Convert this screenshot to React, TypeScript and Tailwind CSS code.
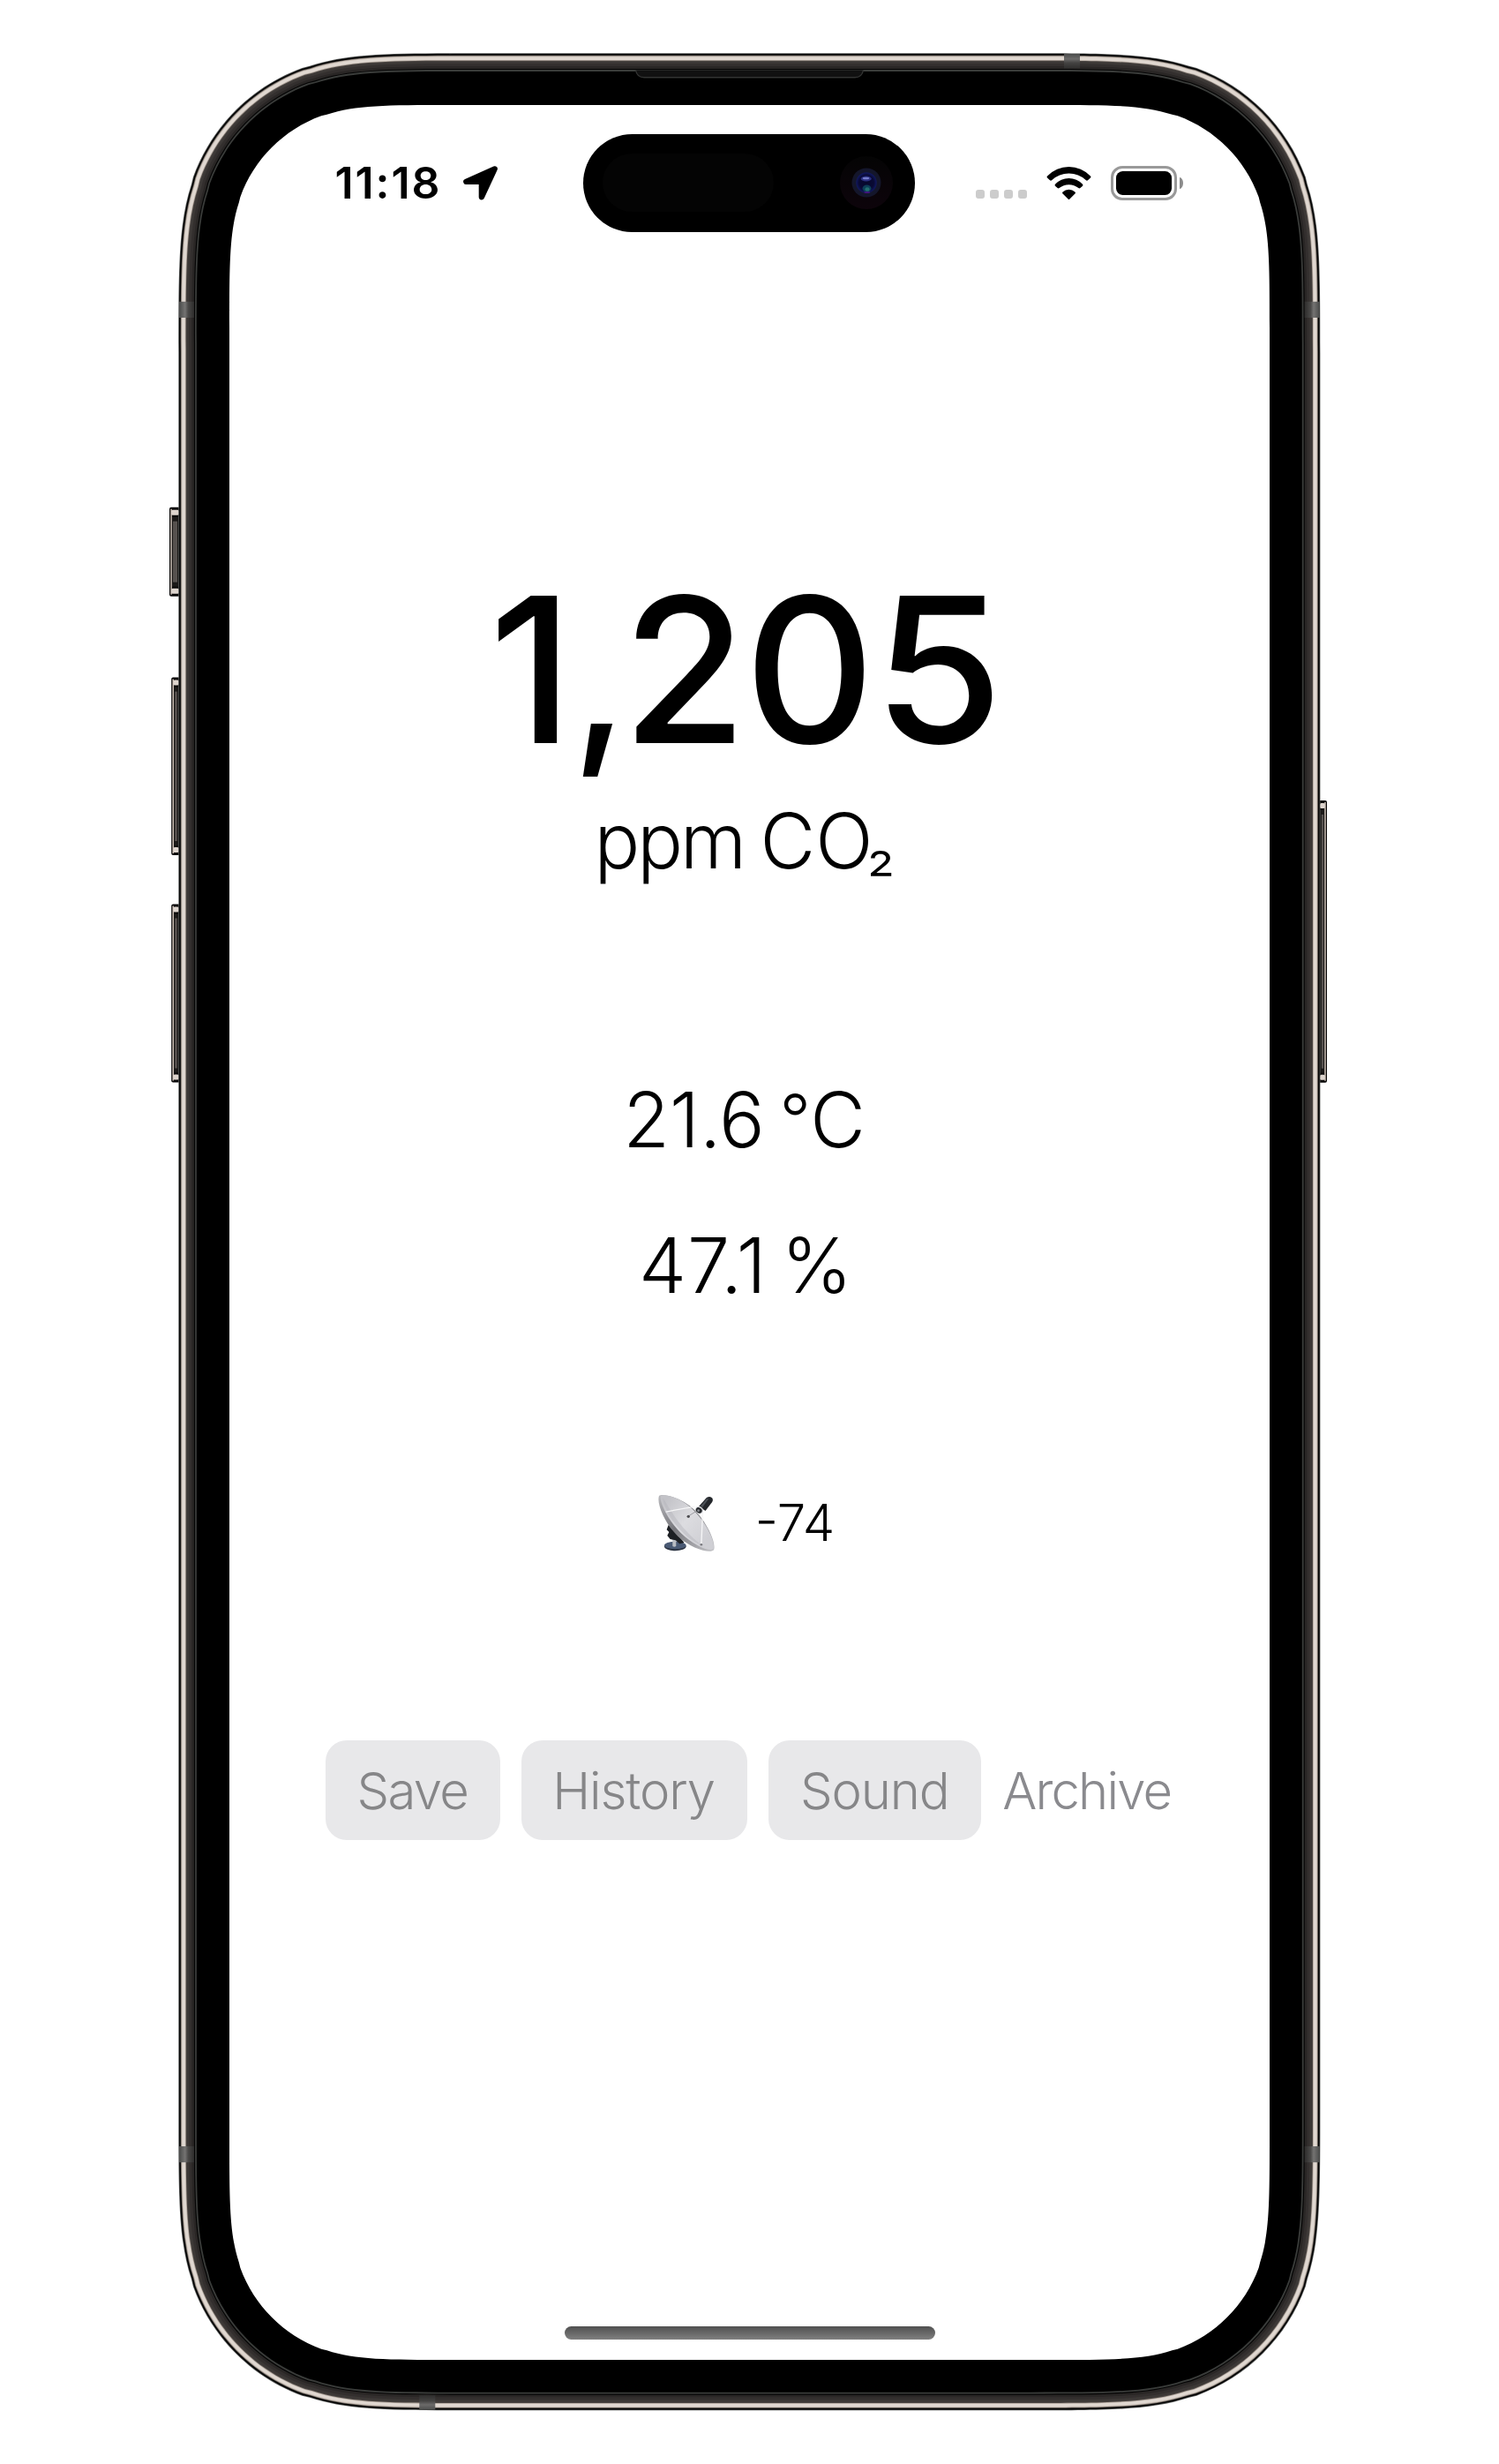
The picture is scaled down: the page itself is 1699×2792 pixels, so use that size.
const FRAME = { left: 202.3, top: 60.3, right: 1496.4, bottom: 2731.3 };

/** Rounded rectangle with continuous-curvature corners. */
function squircle(l: number, t: number, r: number, b: number, rad: number) {
  const p = (k: number) => k * rad;
  const A = p(1.52866);
  const B = p(1.08849);
  const C = p(0.86841);
  const H = p(0.66993);
  const I = p(0.0655);
  const D = p(0.63149);
  const E = p(0.07491);
  const F = p(0.37282);
  const G = p(0.16906);
  return [
    `M${l + A},${t}`,
    `L${r - A},${t}`,
    `C${r - B},${t} ${r - C},${t} ${r - H},${t + I}`,
    `L${r - D},${t + E}`,
    `C${r - F},${t + G} ${r - G},${t + F} ${r - E},${t + D}`,
    `L${r - I},${t + H}`,
    `C${r},${t + C} ${r},${t + B} ${r},${t + A}`,
    `L${r},${b - A}`,
    `C${r},${b - B} ${r},${b - C} ${r - I},${b - H}`,
    `L${r - E},${b - D}`,
    `C${r - G},${b - F} ${r - F},${b - G} ${r - D},${b - E}`,
    `L${r - H},${b - I}`,
    `C${r - C},${b} ${r - B},${b} ${r - A},${b}`,
    `L${l + A},${b}`,
    `C${l + B},${b} ${l + C},${b} ${l + H},${b - I}`,
    `L${l + D},${b - E}`,
    `C${l + F},${b - G} ${l + G},${b - F} ${l + E},${b - D}`,
    `L${l + I},${b - H}`,
    `C${l},${b - C} ${l},${b - B} ${l},${b - A}`,
    `L${l},${t + A}`,
    `C${l},${t + B} ${l},${t + C} ${l + I},${t + H}`,
    `L${l + E},${t + D}`,
    `C${l + G},${t + F} ${l + F},${t + G} ${l + D},${t + E}`,
    `L${l + H},${t + I}`,
    `C${l + C},${t} ${l + B},${t} ${l + A},${t}Z`,
  ].join(" ");
}

/** Bezel rings from the outer edge inwards: inset and colour. */
const LAYERS: [number, string][] = [
  [0, "#5a5c5b"],
  [0.8, "#050505"],
  [2.5, "#6f6862"],
  [3.3, "#c9beb5"],
  [4.2, "#e0d8d1"],
  [7.6, "#b5aaa1"],
  [8.4, "#4b4643"],
  [9.4, "#3c3836"],
  [12, "#332f2e"],
  [15, "#292625"],
  [17.6, "#050505"],
  [18.8, "#3a3c3a"],
  [20.6, "#000000"],
];

function SideButton({ x, y, w, h, flip }: { x: number; y: number; w: number; h: number; flip?: boolean }) {
  return (
    <g transform={flip ? `translate(${x + w} ${y}) scale(-1 1)` : `translate(${x} ${y})`}>
      <rect width={w + 3} height={h} rx="2" fill="#0a0909" />
      <rect x="1.3" y="2" width="1.5" height={h - 4} fill="#cfc3b9" />
      <rect x="2.2" y="3" width={w - 2.4} height="6" rx="1.5" fill="#ded5ce" />
      <rect x="2.2" y={h - 9} width={w - 2.4} height="6" rx="1.5" fill="#ded5ce" />
      <rect x="3" y="11" width={w - 3} height={h - 22} fill="#1b1918" />
      <rect x="4" y="16" width={w - 6} height={h - 32} fill="#57524f" />
    </g>
  );
}

function PhoneFrame() {
  const { left, top, right, bottom } = FRAME;
  return (
    <svg className="absolute inset-0" width="1699" height="2792" viewBox="0 0 1699 2792" aria-hidden="true">
      <defs>
        <linearGradient id="bandH" x1="0" x2="1">
          <stop offset="0" stopColor="#4a4b4a" />
          <stop offset="0.4" stopColor="#747372" />
          <stop offset="0.6" stopColor="#4a4948" />
          <stop offset="1" stopColor="#2e2d2c" />
        </linearGradient>
        <linearGradient id="bandV" x1="0" x2="0" y1="0" y2="1">
          <stop offset="0" stopColor="#4a4b4a" />
          <stop offset="0.35" stopColor="#6c6b6a" />
          <stop offset="0.6" stopColor="#454443" />
          <stop offset="1" stopColor="#2e2d2c" />
        </linearGradient>
      </defs>
      <SideButton x={192} y={571 + 3.7} w={11} h={101} />
      <SideButton x={194.2} y={767.6} w={8.6} h={201.4} />
      <SideButton x={194.2} y={1024.5} w={8.6} h={202} />
      <SideButton x={1495.8} y={907} w={8.2} h={319.7} flip />
      {LAYERS.map(([d, fill]) => (
        <path key={d} d={squircle(left + d, top + d, right - d, bottom - d, 222 - d)} fill={fill} />
      ))}
      <rect x="203" y="341.8" width="17" height="18.2" fill="url(#bandH)" />
      <rect x="203" y="2432" width="17" height="18.2" fill="url(#bandH)" />
      <rect x="-1495.7" y="341.8" width="17" height="18.2" fill="url(#bandH)" transform="scale(-1 1)" />
      <rect x="-1495.7" y="2432" width="17" height="18.2" fill="url(#bandH)" transform="scale(-1 1)" />
      <rect x="1206" y="61" width="18" height="16.7" fill="url(#bandV)" />
      <rect x="475.3" y="-2730.7" width="18" height="16.7" fill="url(#bandV)" transform="scale(1 -1)" />
      <path
        d="M720.5 79.5 Q722 87.8 730 87.8 H969 Q977 87.8 978.5 79.5"
        fill="#111111"
        stroke="#333433"
        strokeWidth="1.4"
      />
      <path d={squircle(260, 119, 1439, 2674, 165)} fill="#ffffff" />
    </svg>
  );
}

function LocationArrow() {
  return (
    <svg className="ml-[28px] h-[39px] w-[39px] shrink-0" viewBox="1035 443 118 118">
      <path d="M1143 453 L1045 497 H1098 V550Z" fill="#000" stroke="#000" strokeWidth="19" strokeLinejoin="round" />
    </svg>
  );
}

function Camera() {
  return (
    <svg className="h-[60px] w-[60px]" viewBox="0 0 60 60">
      <defs>
        <linearGradient id="cam" x1="0" x2="0" y1="0" y2="1">
          <stop offset="0" stopColor="#040404" />
          <stop offset="1" stopColor="#0d040b" />
        </linearGradient>
        <radialGradient id="lens" cx="0.5" cy="0.5" r="0.5">
          <stop offset="0" stopColor="#07082c" />
          <stop offset="0.7" stopColor="#090a34" />
          <stop offset="0.93" stopColor="#10165c" />
          <stop offset="1" stopColor="#141a3c" />
        </radialGradient>
      </defs>
      <circle cx="30" cy="30" r="30" fill="url(#cam)" />
      <circle cx="30" cy="30" r="16.5" fill="#14162b" />
      <circle cx="30" cy="30" r="12" fill="url(#lens)" />
      <ellipse cx="29.7" cy="25.5" rx="6" ry="3" fill="#2c3080" />
      <ellipse cx="29.5" cy="25" rx="3.8" ry="1.3" fill="#737bcc" />
      <ellipse cx="30.5" cy="36.5" rx="5" ry="4" fill="#0d3f58" />
      <ellipse cx="31" cy="37.5" rx="2.6" ry="2.2" fill="#22706f" />
      <ellipse cx="30.8" cy="41" rx="3.4" ry="1.1" fill="#431580" />
    </svg>
  );
}

function WifiGlyph() {
  return (
    <svg className="ml-[22px] h-[37px] w-[51px] shrink-0" viewBox="318 443 152 112">
      <path d="M320 475 A102 102 0 0 1 468 475 Q471 478 468 481 L459 489 Q456 492 453 489 A87 87 0 0 0 335 489 Q332 492 329 489 L320 481 Q317 478 320 475Z" />
      <path d="M347 503 A64 64 0 0 1 441 503 Q444 506 441 509 L433 516 Q430 519 427 516 A52 52 0 0 0 361 516 Q358 519 355 516 L347 509 Q344 506 347 503Z" />
      <path d="M373 529 A32 32 0 0 1 415 529 Q418 532 415 535 L396 554 Q394 556 392 554 L373 535 Q370 532 373 529Z" />
    </svg>
  );
}

function Battery() {
  return (
    <div className="ml-[22px] flex items-center">
      <div className="h-[39px] w-[75px] rounded-[13px] border-[3px] border-[#999999] p-[3px]">
        <div className="h-full w-full rounded-[7.5px] bg-black" />
      </div>
      <div className="ml-[3px] h-[13px] w-[4px] rounded-r-[4px_6.5px] bg-[#8c8c8c]" />
    </div>
  );
}

function StatusBar() {
  return (
    <div className="flex h-[111px] items-center pl-[119.5px]">
      <div className="w-[117.5px] text-[50px] leading-none font-semibold tracking-[1.9px] whitespace-nowrap">11:18</div>
      <LocationArrow />
      <div className="ml-[97.4px] flex h-[111px] w-[375.3px] shrink-0 items-center rounded-full bg-black pr-[25px] pl-[22px]">
        <div className="h-[66px] w-[194px] rounded-full bg-[#040404]" />
        <div className="ml-auto">
          <Camera />
        </div>
      </div>
      <div className="mt-[26px] ml-[69px] flex gap-[6px]">
        {[0, 1, 2, 3].map((i) => (
          <div key={i} className="h-[10px] w-[10px] rounded-[3px] bg-[#cccccc]" />
        ))}
      </div>
      <WifiGlyph />
      <Battery />
    </div>
  );
}

function SatelliteDish() {
  return (
    <svg className="h-[66px] w-[64.5px] shrink-0" viewBox="137 97 194 198">
      <defs>
        <linearGradient id="dish" x1="0.1" y1="0.1" x2="0.9" y2="0.8">
          <stop offset="0" stopColor="#c3c3c8" />
          <stop offset="0.5" stopColor="#dcdce0" />
          <stop offset="1" stopColor="#cfcfd4" />
        </linearGradient>
        <linearGradient id="rim" x1="0" y1="0" x2="1" y2="1">
          <stop offset="0" stopColor="#b9b9bd" />
          <stop offset="0.45" stopColor="#77777c" />
          <stop offset="1" stopColor="#c4c4c8" />
        </linearGradient>
      </defs>
      <ellipse cx="195" cy="275" rx="37" ry="15" fill="#2c3442" />
      <ellipse cx="195" cy="271" rx="37" ry="13" fill="#4a5a74" />
      <path d="M186 240 H198 V274 Q192 279 186 274Z" fill="#b8bcc2" />
      <path d="M172 202 L186 218 L212 246 L226 262 L210 266 L196 254 L178 250 L168 238 L174 226 L166 218Z" fill="#1d2024" />
      <path d="M140 103 C152 92 222 110 264 154 C304 196 335 262 327 286 C318 301 250 284 204 240 C162 200 130 128 140 103Z" fill="url(#rim)" />
      <path d="M145 103 C160 93 222 112 262 156 C302 198 333 260 325 284 C312 294 258 272 214 229 C172 188 140 124 145 103Z" fill="url(#dish)" />
      <path d="M152 110 C170 128 196 200 284 270 C246 258 172 196 152 110Z" fill="#b4b4ba" opacity="0.45" />
      <path d="M163 157 L262 139 M289 152 L284 268" stroke="#f6f6f7" strokeWidth="4" fill="none" />
      <path d="M271 152 L240 172" stroke="#9a9a9f" strokeWidth="3" />
      <circle cx="240" cy="173" r="5" fill="#4c4c50" />
      <circle cx="284" cy="269" r="4" fill="#77777c" />
      <path d="M302 109 Q314 101 322 111 Q325 117 321 124 L298 154 L276 138Z" fill="#24272b" />
      <path d="M303 112 L282 137 L288 142 L309 113Z" fill="#4b5056" />
      <ellipse cx="277" cy="151" rx="14" ry="12" transform="rotate(35 277 151)" fill="#d9dadd" />
      <ellipse cx="276" cy="152" rx="11" ry="9" transform="rotate(35 276 152)" fill="#26292d" />
      <circle cx="274" cy="153" r="4" fill="#8d9096" />
    </svg>
  );
}

const chip =
  "flex h-[113.5px] items-center rounded-[24px] bg-[#e8e8ea] pt-px text-[58px] leading-none font-light text-[#868688] whitespace-nowrap";

export default function App() {
  return (
    <div className="relative h-[2792px] w-[1699px] overflow-hidden bg-white font-['Inter',sans-serif] text-black">
      <PhoneFrame />
      <main className="relative ml-[260px] flex h-[2792px] w-[1179px] flex-col pt-[151.8px]">
        <StatusBar />
        <div className="mt-[381.2px] ml-[294.5px] h-[229px] text-[229px] leading-[229px] font-medium whitespace-nowrap">
          <span className="tracking-[-1.5px]">1</span>
          <span className="text-[210px] leading-none tracking-[-6.5px]">,</span>
          <span className="tracking-[-2.5px]">2</span>
          <span className="tracking-[-2px]">0</span>
          <span className="inline-block origin-left scale-x-104">5</span>
        </div>
        <div className="mt-[37px] ml-[413.4px] h-[86px] text-[86px] leading-[86px] font-light whitespace-nowrap">
          <span className="tracking-[-3px]">ppm</span>
          <span className="tracking-[-5.6px]"> </span>
          <span>C</span>
          <span className="tracking-[-7px]">O</span>
          <span className="relative -top-[2px] text-[73px] leading-none">₂</span>
        </div>
        <div className="mt-[230.3px] ml-[446.3px] h-[86px] text-[86px] leading-[86px] font-light whitespace-nowrap">
          21.6<span className="tracking-[-7.5px]"> </span>
          <span className="relative -top-[4px] text-[78px] leading-none tracking-[-0.8px]">°</span>C
        </div>
        <div className="mt-[79px] ml-[464px] h-[86px] text-[86px] leading-none font-light whitespace-nowrap">
          <span className="tracking-[0.8px]">47.1</span>
          <span className="tracking-[-8px]"> </span>%
        </div>
        <div className="mt-[215.4px] ml-[486px] flex h-[66px] items-start">
          <SatelliteDish />
          <div className="mt-[3px] ml-[45.2px] text-[58px] leading-none font-light whitespace-nowrap">-74</div>
        </div>
        <div className="mt-[213.3px] ml-[109px] flex items-center gap-[24.2px]">
          <button className={`${chip} w-[197.8px] pl-[35.4px] tracking-[-1.6px]`}>Save</button>
          <button className={`${chip} w-[255.8px] pl-[35.3px] tracking-[-1.15px]`}>History</button>
          <button className={`${chip} w-[241px] pl-[36px] tracking-[-1.15px]`}>Sound</button>
          <span className="pt-px text-[58px] leading-none font-light tracking-[-1.8px] whitespace-nowrap text-[#8a8a8e]">
            Archive
          </span>
        </div>
        <div className="mt-[550.3px] ml-[380px] h-[15px] w-[420px] rounded-full bg-gradient-to-b from-[#505050] to-[#808080]" />
      </main>
    </div>
  );
}
